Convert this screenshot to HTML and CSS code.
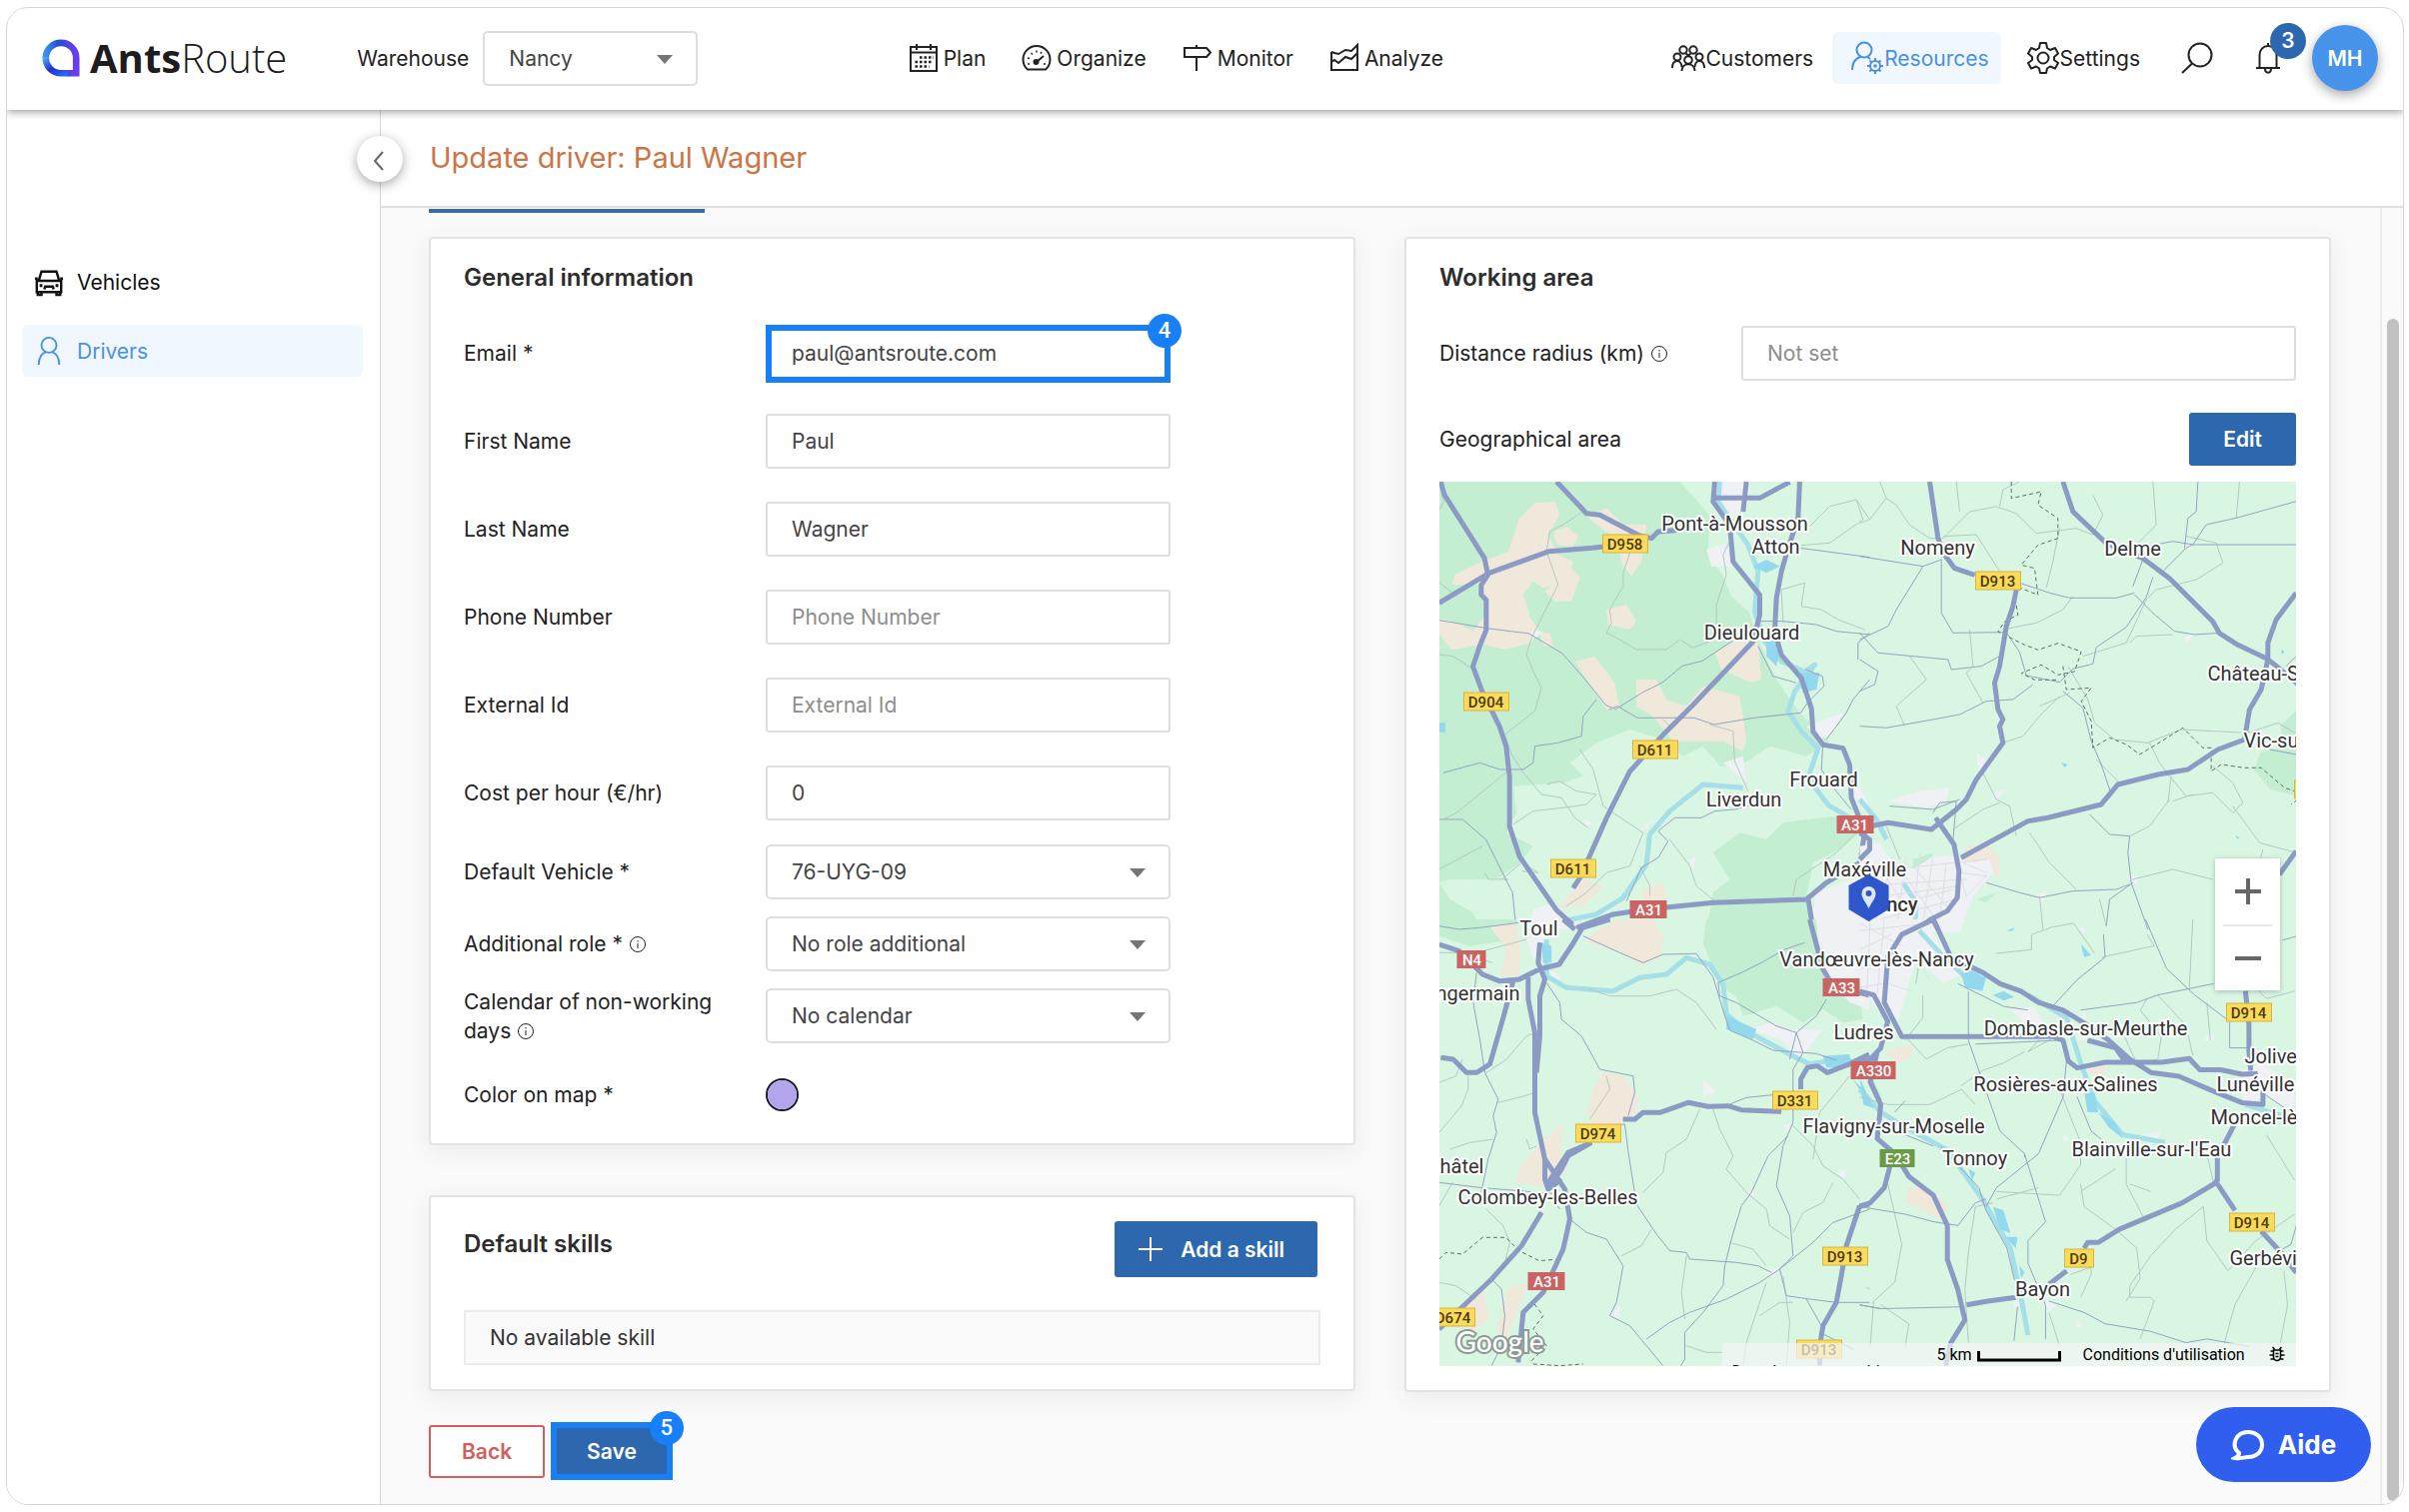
FILE: index.html
```html
<!DOCTYPE html>
<html lang="en">
<head>
<meta charset="utf-8">
<title>AntsRoute - Update driver</title>
<link rel="stylesheet" href="styles.css">
</head>
<body>
<div class="app">
  <header class="topbar">
    <a class="logo" href="#">
      <svg class="logo-mark" viewBox="0 0 40 40" aria-hidden="true">
        <defs>
          <linearGradient id="ring" x1="0" y1="0" x2="1" y2="0"><stop offset="0" stop-color="#3b8ef5"/><stop offset=".4" stop-color="#2350cf"/><stop offset="1" stop-color="#6a3df0"/></linearGradient>
          <linearGradient id="ring2" x1="0" y1="0" x2="1" y2="1"><stop offset="0" stop-color="#4aa8f8"/><stop offset=".5" stop-color="#1f2fd0"/><stop offset="1" stop-color="#2a6bf0"/></linearGradient>
        </defs>
        <path d="M4 20a16 16 0 0 1 32 0v16H26" fill="none" stroke="url(#ring)" stroke-width="7"/>
        <path d="M4 19a16 16 0 0 0 16 17h7" fill="none" stroke="url(#ring2)" stroke-width="7"/>
      </svg>
      <span class="logo-text"><b>Ants</b>Route</span>
    </a>
    <div class="warehouse">
      <label for="warehouse">Warehouse</label>
      <span class="select"><select id="warehouse"><option>Nancy</option></select></span>
    </div>
    <nav class="nav nav-main">
      <a href="#"><svg viewBox="0 0 30 30"><path d="M2 4h26v24H2zM2 9.500h26M8 1v6M22 1v6"/><path d="M11 14.500h14M6.500 19h18M6.500 23.500h14" stroke-dasharray="2.500 2" stroke-width="2.500"/></svg>Plan</a>
      <a href="#"><svg viewBox="0 0 30 30"><path d="M6 26.500a13.500 13.500 0 1 1 18 0zM15 19l7-6"/><circle cx="14.500" cy="19" r="2" fill="currentColor"/><path d="M6 21h2M6 15l2 .5M9.500 10l1.500 1.500M15 7.500v2M24 21h-2M20 9l-1 1.500" stroke-width="1.500"/></svg>Organize</a>
      <a href="#"><svg viewBox="0 0 30 30"><path d="M2 5h22l4 4.500-4 4.500H2zM14 2v3M14 14v14"/></svg>Monitor</a>
      <a href="#"><svg viewBox="0 0 30 30"><path d="M2 9v18h26V2l-6 6-6-1-7 4-4-1-3-1M2 19l3-2 4 3 7-6 6 2 6-6"/></svg>Analyze</a>
    </nav>
    <nav class="nav nav-side">
      <a href="#"><svg class="wide" viewBox="0 0 34 30"><circle cx="12" cy="7" r="3.700"/><circle cx="22" cy="7" r="3.700"/><circle cx="6" cy="14" r="3.500"/><circle cx="28" cy="14" r="3.500"/><circle cx="17" cy="17" r="3.800"/><path d="M1 25c0-9 9-9 9.500-1M33 25c0-9-9-9-9.500-1M10.500 28c0-9 13-9 13 0M14.500 10.500l2.500 2 2.500-2"/></svg>Customers</a>
      <a class="active" href="#"><svg class="wide" viewBox="0 0 34 34"><circle cx="14" cy="9" r="7.500"/><path d="M2 29c0-8 4-12 9-13.500M17 16l3 2"/><circle cx="25" cy="25" r="5"/><path d="M25 17v3M25 30v3M17 25h3M30 25h3M19.500 19.500l2 2M28.500 28.500l2 2M19.500 30.500l2-2M28.500 21.500l2-2"/><circle cx="25" cy="25" r=".8"/></svg>Resources</a>
      <a href="#"><svg class="wide" viewBox="0 0 34 34"><circle cx="17" cy="17" r="5.500"/><path d="M14 2h6l1 5 3 2 5-2 3 5.500-4 3.500v3l4 3-3 5.500-5-2-3 2-1 4.500h-6l-1-4.500-3-2-5 2-3-5.500 4-3v-3l-4-3.500L5 7l5 2 3-2z" stroke-linejoin="round"/></svg>Settings</a>
      <button class="icon-btn" type="button" aria-label="Search"><svg viewBox="0 0 34 34"><circle cx="20" cy="14" r="11.500"/><path d="M12 22.500L2 32"/></svg></button>
      <button class="icon-btn bell" type="button" aria-label="Notifications"><svg viewBox="0 0 34 34"><path d="M5 27h24M8.500 27V14c0-5 3.500-9 8.500-9s8.500 4 8.500 9v13M17 2v3M14 27.500c0 5.500 6 5.500 6 0"/></svg><span class="count">3</span></button>
      <button class="avatar" type="button">MH</button>
    </nav>
  </header>

  <div class="body">
    <aside class="sidebar">
      <a href="#"><svg viewBox="0 0 32 32"><path d="M3 15h26v12H3zM5 15l3-10h16l3 10M1 12.500h3M28 12.500h3M4 27v3h4v-3M24 27v3h4v-3M11 24l1-3h8l1 3" stroke-width="2.600"/><path d="M6 20h3M23 20h3" stroke-width="3"/></svg>Vehicles</a>
      <a class="active" href="#"><svg viewBox="0 0 32 32"><circle cx="16" cy="10" r="8"/><path d="M5 31c0-8 4-13 8-13.500M27 31c0-8-4-13-8-13.500"/></svg>Drivers</a>
      <button class="collapse" type="button" aria-label="Collapse menu"><svg viewBox="0 0 24 24"><path d="M15 3L7 12l8 9"/></svg></button>
    </aside>

    <main class="main">
      <div class="titlebar"><h1>Update driver: Paul Wagner</h1></div>
      <div class="scroll">
        <form class="content">
          <div class="tab-line"></div>
          <div class="columns">
            <div class="column">
              <section class="card general">
                <h2>General information</h2>
                <div class="field"><label for="email">Email *</label><div class="control step"><input id="email" type="email" value="paul@antsroute.com"><span class="pin">4</span></div></div>
                <div class="field"><label for="first">First Name</label><div class="control"><input id="first" type="text" value="Paul"></div></div>
                <div class="field"><label for="last">Last Name</label><div class="control"><input id="last" type="text" value="Wagner"></div></div>
                <div class="field"><label for="phone">Phone Number</label><div class="control"><input id="phone" type="tel" placeholder="Phone Number"></div></div>
                <div class="field"><label for="ext">External Id</label><div class="control"><input id="ext" type="text" placeholder="External Id"></div></div>
                <div class="field"><label for="cost">Cost per hour (€/hr)</label><div class="control"><input id="cost" type="text" value="0"></div></div>
                <div class="field tight"><label for="vehicle">Default Vehicle *</label><span class="control select"><select id="vehicle"><option>76-UYG-09</option></select></span></div>
                <div class="field tight"><label for="role">Additional role * <svg class="info" viewBox="0 0 18 18"><circle cx="9" cy="9" r="7.500"/><path d="M9 8v5M9 5v1.500"/></svg></label><span class="control select"><select id="role"><option>No role additional</option></select></span></div>
                <div class="field tight"><label for="calendar">Calendar of non-working days <svg class="info" viewBox="0 0 18 18"><circle cx="9" cy="9" r="7.500"/><path d="M9 8v5M9 5v1.500"/></svg></label><span class="control select"><select id="calendar"><option>No calendar</option></select></span></div>
                <div class="field color"><label for="color">Color on map *</label><input id="color" type="color" value="#b3a4eb"></div>
              </section>
              <section class="card skills">
                <div class="card-head"><h2>Default skills</h2><button class="btn add" type="button"><svg viewBox="0 0 24 24"><path d="M12 0v24M0 12h24"/></svg>Add a skill</button></div>
                <p class="empty">No available skill</p>
              </section>
            </div>
            <section class="card area">
              <h2>Working area</h2>
              <div class="field"><label for="radius">Distance radius (km) <svg class="info" viewBox="0 0 18 18"><circle cx="9" cy="9" r="7.500"/><path d="M9 8v5M9 5v1.500"/></svg></label><div class="control"><input id="radius" type="text" placeholder="Not set"></div></div>
              <div class="geo"><span>Geographical area</span><button class="btn edit" type="button">Edit</button></div>
              <div class="map">
                <svg class="map-canvas" viewBox="0 0 858 885" preserveAspectRatio="xMidYMid slice" role="img" aria-label="Map of Nancy">
                  <!-- north-west land cover -->
                  <g transform="translate(-9 -2) scale(.3333)">
                    <path class="forest" d="M28 6H750L800 60 840 110 835 220 880 290 905 350 960 400 980 470 1040 600 1110 700 1200 790 1130 830 1020 800 930 860 870 860 820 800 760 830 700 780 600 750 500 790 420 850 460 890 400 910 250 920 260 1000 230 1060 310 1100 270 1150 200 1200 60 1200 28 1210z"/>
                    <path class="forest" d="M850 1120L930 1060 1010 1080 1060 1030 1130 1020 1220 1010 1290 1060 1230 1110 1150 1150 1130 1250 1160 1350H830L850 1240 900 1200zM28 1210L60 1260 130 1300 150 1350H28z"/>
                    <path class="field-tan" d="M265 120l50-50 60-5 15 40-35 60 30 60 45 20-20 60-70 20-30-20-30 40 20 60-5 0 30 45-20 40-80 20-60-15-100 15-45-55 0-40 60 15 50 25 40-55-15-60 10-25-100 0 10-30 60-30 100-40 20-55zM370 155l40-15 35 30-15 30-50-5zM345 335l80-70 25 30-25 70-50 0zM470 110l60-25 50 50 70 0-15 110-30 45-30-40-10-70-45-30zM530 390l60-15 30 50-20 25-65-15zM435 545l60-15 60 80 15 80-40 0-40-60zM620 600l60 0 30 60 60 20 50-60 110 30 20 130-10 35-60-30-150 0-60-75-50-30zM855 520l70-40 60 10 10 110-30 10-90-40zM330 460l30 0 10 40-30 0zM380 1290l80-90 60 20-60 60zM640 1230l60-20 10 60-70 10z"/>
                    <path class="town" d="M830 210l60-20 15 70-60 0zM850 6h110v60l-40 40-50-10zM1130 740l110-40-30 60-40 20zM880 850l60-20 10 80zM300 1350l10-60 60-20 90 80zM1140 1350l20-110 160-60v170zM1230 900l60 20 30 60-10 20zM460 1020l30 10-20 10zM630 1050l40-30-20 30zM780 1140l20-10-10 40zM300 455l40 0-20 20z"/>
                    <path class="river" d="M870 6l-5 60 90 130 30 80-10 120 30 90 50 60 70 30 30-20-60 80-20 60 40 60 50 50-30 90 60 80 100 60M940 925l-120-10-100 80-60 70-10 90-70 100-80 50-100 20"/>
                    <path class="lake" d="M970 260l40-20 40 20-40 20zM1010 460l40 40-10 60-30-30zM1100 580l70 0-10 50-40 10zM28 730h18v28H28z"/>
                    <path class="lane" d="M130 570l-60-40-42-5M28 310l55 40M28 90l14-25-8-25M460 95l-60 40-40 20-10 60 35 100-50 100-30 60-15 50 20 50 25 50-20 70-90 70 20 60 40 60 50 60 60 10 40 60 40 30M600 220l-20 60 0 40-40 70 5 40-15 30 40 20 50 30h90l40-30 40 25 50-20 20-50 0-60 30-90-10-60 30-60M1060 430l-5-100 70-20-10 70 60 10 50 30 80 30M1280 60l20 60 0 0-100 70-120 10M1320 120l-40-60-80 20-60 60M450 810l40 60 30 110 120 80-40 100-70 20-60 60-60 40M720 740l-20-20M840 735l70 20 5 90 40 90M250 1035l60-40 90-10 70-10 30-30-60-10-50-30-40 10M28 1170l130-70M240 870l-160 130-40 20M1090 1250l10-50 60-40 60-40 60-60M720 1080l60 80 20 60 60 50M630 1160l30 60 0 30M215 1200l60-50 50 30-50-5M165 1180l10 20 60 0"/>
                    <path class="road" d="M28 422l150 25 120 15 100 60 70 80 60 75 30 12 80-50 60-30 60-50 60-15 90-60M538 690l25-10 60 35 170 0 60 20 120-20 140-15 20-30 50-50-5-30-50-20M500 660l-40 50-5 60-70 20-70 10-5 50-30 20-70 0-60-20-110 30M28 1020l70 0 70 60 50 100 30 60 10 100M1110 205l210 28M980 425l80 0 100 10 60 20 100 10M1320 600l-50 60-20 40-60 80M590 1265l45-100 50-30 30-50-30-30 50-40 80 0 40-20 60-5 60-15M1285 540l0-50 35-30M1100 610l-70-20-30-60-15-30M1180 790l-5 80 40 60 50 60"/>
                    <path id="major-nw" class="major" d="M32 6l12 40 120 190 10 50-20 30 0 30 15 15 0 90-20 50-20 60 30 80 50 100 20 60 10 90 0 150 30 90 110 160 50 45M380 6l90 95 40 5 115 60 40 10 20-20 70-5M28 370l150-90 180-65 130-10 90-10 75-15M1110 6l-5 110-30 90-20 70-15 80-5 100 20 70 60 70 30 90 5 70 30 40 60 10 20 50 5 100 40 100-10 70 40 60-20 70M855 6l-5 60 50 70 10 110 80 100 0 60-20 80-180 190-90 90-100 110-70 140-80 180-20 30M850 55l140 0 90-48M950 6l-10 90M440 1345l110-40 100-15 200-20 280-10 60-50 100-60M1135 1255l15 95"/>
                    <use class="major-core" href="#major-nw"/>
                  </g>
                  <!-- north-east -->
                  <g transform="translate(421 -2) scale(.3333)">
                    <path class="forest" d="M1313 690l-50 50 10 60-70 20-20 50 50 60 80 20zM160 1140l60-20-10 40-50 0zM350 1260l60-20-30 30zM0 1340l0-10z"/>
                    <path class="field-tan" d="M320 1100l60-10 40 50 0 50-60-20-60 10z"/>
                    <path class="town" d="M0 1100l60-10 40 60 60 20 60-40 60 0 60 20 50-10 10 40-60 70-40 110H0zM80 965l100-30 90-10-10 40-60 20zM350 820l40 30-30 40zM400 940l40-10-30 30zM970 480l30-20-10 30zM970 200l20-10 10 20zM1050 745l30 5-10 10zM800 1190l30 0 5 30zM530 1250l30-15-15 40z"/>
                    <path class="lake" d="M605 850l20 5-10 8zM1125 1068l15 6-5 5zM1265 510l10 5-8 10z"/>
                    <path class="river" d="M0 960l50 60 30 60M130 1210l40 60-5 80"/>
                    <path class="streets" d="M0 1180l380-40M0 1220l320-20M0 1260l300-40M20 1300l260-70M60 1320l230-60M100 1130l-60 220M140 1130l-30 220M180 1120l-20 220M220 1130l-30 200M260 1150l-20 170M50 1150l120 180M110 1150l110 160M160 1160l110 130M300 1180l80 10-60 60zM310 1150l70 30"/>
                    <path class="lane" d="M60 6l20 50 30 20 40 60 60 40 40 0 80-80 80-15 60 20 60 60 120-15 50 20 30-60-30-60M0 130l30-10 50-65M290 6l10 90M420 80l10-50 50-24M880 6l10 130-60 60M600 145l-20 100-20 80M250 170l100-5 70 110M640 350l-30 40-80 40-100 20M330 450l10 110-20 20 50 90M150 530l50 70-90 80 25 60M540 680l90-40M430 790l60-20 50-60 60-60M670 530l130-40 60-130 30-30 120-30 80-50-20-60-90-20M625 560l60 100 20 70 60 50 100 10 100-40 200 10 90-30 50 30M370 880l40 80 40 20 20 90M280 1050l90-60 50-20M870 790l30 60 30 40 50 60 80-10 60 60 30-30-30-60-60-50M710 840l70 70M925 970l10-80M1120 980l80 110 110 30M930 960l-60 80-60 30M1000 945l-60 20M510 1060l60 90 80 80M820 1200l120-30 120 30M540 1250l10 100M720 1260l20 80M1140 6l-10 110M80 1040l40 100M810 490l20-20 110-5M1210 1110l-10 40"/>
                    <path class="road" d="M0 230l190 30 55-20 0 160 35 60 160-2 40 60 20 70 100 20 40-40 60-15 10-50 90-60 60-90 20-60M190 260l-80 130-25 50-85 40M480 310l90 30 60 15 140 0 55-15M825 345l60 60 60 50 60 10 80-5M0 460l55 60 210 20 10 30 90-10 55-30M0 540l55 35-10 40-45 20M0 740l80 5 140-25 80-15 80-40 80-5 60-45M610 635l60 50 25 100 30 70 30 90M1310 65l-180 50-90 20-40 60-20 10-80 80M860 200l80-15 60 10 310 0M1015 6l-5 90-25 20-10 90M850 240l-30 80M690 1005l60 60 60 5-5 50 10 90 50 140M380 1210l100 30 60 15 100-20 130-5 40-15M740 1340l10-80 70-50M1310 530l-30 30M1230 810l80 15M90 980l130 10 80-30M220 1000l20-30 50-5-10 120"/>
                    <path class="border" d="M455 6l0 50 90-20-10 40 60 40 0 60-60 20-50 60 40 10 10 80-50-20-20 20 10 60-40 20-20 30 80 40 40 15 60-20 70 25-20 60-50 10-50-30-60 25 40 20 70 0M610 560l10 70 75-5-30 40 30 60 5 80 50-30 50 20 40 30 50-30 80-50 60 60 25 0 0 70 30-20 70 10 50 0 70 60 60 20-40 30"/>
                    <path id="major-ne" class="major" d="M210 6l25 170 20 50 30 40 60 20M470 330l-10 50-20 60-20 120-15 50 10 80 15 30-10 20 10 50-80 110-30 60-30 30-75 60-130-20-50 10M228 1015l55 80 15 80-5 80-30 40-50 25-40 30M610 6l30 90 100 95 110 45 80 60 130 130 20 35 55 35 85 40 20 15 90 75M1310 340l-60 80-25 70 0 50-20 90-35 60-15 90-80 30-90 60-90 15-120 30-50 60-160 40-60 10-200 110M0 1140l30-30 0-30-30-20M1310 1115l-50 70M220 1320l15 30"/>
                    <use class="major-core" href="#major-ne"/>
                  </g>
                  <!-- south-west -->
                  <g transform="translate(-9 438) scale(.3333)">
                    <path class="forest" d="M830 0h330l20 150 110 90 10 60-60 10-60-40-60 40-80-50-100 30-20-60-50-30-50-130zM28 0h230l0 60-140 20-90-30z"/>
                    <path class="field-tan" d="M460 60L560 0h110l30 50-10 60-50 30-50-30zM180 20l80-10 10 80 0 80-60 0 20-80zM470 580l20-70 30-50 60 10 50 70-10 40-80 60-50-20zM340 660l60-50-10 100 20 50-70 40-80-10 10-50zM100 1150l60-40 20 90-60 40zM230 1110l60-20-10 40-50 130-30-20z"/>
                    <path class="town" d="M290 60l60-20 10 60-50 20zM960 330l60-20 60 20 100 0-70 90-60-60zM820 480l40 40-40 10zM1160 0h160v270l-60-20-50-60-40-60zM540 1190l30-30 0 30zM1010 1060l40-15-20 30zM1060 620l20-10-5 30zM1220 760l30-10-10 30zM940 820l40-5-10 15zM360 150l40 30-30 0z"/>
                    <path class="river" d="M350 60l0 110 60 35 140 10 80-40 80-10 60-50 70 20 40 60 10 90 60 50 130 70 60 30 110-20 70 60 30 70"/>
                    <path class="lake" d="M335 70l30 10 0 50-25 0zM890 290l90 40-10 30-80-30zM1180 410l80-5 0 40-70 0zM1270 480l50 50v30z"/>
                    <path class="lane" d="M28 490l50-20 20-50M115 470l0 40-20 50-67 80M170 460l60-40 60-70 30-10M205 550l80-20 30-10M320 680l-20 10-10-30M60 690l60-20 70-10M28 860l40-70M170 870l50 50 20 50-20 80M530 470l10 40-60 90M640 820l60-60 10-60 60-40 40-90M850 570l20 60 40 80-20 40 60 70 60 50 10 50 60 40M1090 620l60 60 30 60 60 40 50 60M1090 940l30-60 60-30 30-60M900 970l70 20 40 50M1010 1090l-60 180-10 70M1060 1070l20 140-10 130M1150 720l20-140 90-110M480 210l60 20 120 0 80-20 60 40 60 80M770 1010l-15 110 10 80M770 1280l60 20 50 0M990 1190l60-40 40 0M28 1090l50 10 60 40M575 1010l60-30 30-50M1320 1110l-10-5M28 100l60 0 100 30M140 100l150-40"/>
                    <path class="road" d="M28 20l60 10 60-5 120-15M460 50l110 50 70 30 60-25 100-2 50 70 30 100 20 60 70 30 60 30 130 10 60 20M140 160l-10 90 20 110 15 100 40 80-15 50 10 50-25 80-25 120M28 790l120 15 240 20M350 190l40 60 5 50 60 50 55 100 100 20 5 50-20 70M510 620l75-5 10 80 25 160 60 90 40 50 50 5 10 20 140 10 65 10 40 20M420 900l50 40 60 20 50 80-20 110-20 40 60 30 50 60 50 60M1050 1050l40-40-10-120-40-90 20-120 30-70 0-160 30-50-20-60-60-20-120-70-50-20-5-40 70-30 60-30 70-40 60-20M1075 650l-60 60-50 110-30 40-30 100-20 80-5 60-60 80-55 60 0 80-40 70M1320 870l-110 40-60 60-100 80-60 40-100 50-110 40-60 30-70 50M1050 1050l20 80 70 10 80 10 100 0M1130 1140l45 80M1170 1240l100 50M1080 420l20-80 60-50 30-50M900 555l50-20 100-10M185 1080l30 30 10 80-10 90-30 60M390 870l-30-40"/>
                    <path class="border" d="M28 1020l20-20 50 5 60-50 70 0 40 40 60 30 60-5M350 1110l-40 40 30 40-30 40 40 50-50 50M310 1335l80 5 70-5"/>
                    <path id="major-sw" class="major" d="M28 75l60 20 70 70 50 20 60-5 60-30 60-15 40-60 30-50L540 0M330 70l-5 60 20 50-15 50 0 120-10 110M295 170l0 70 20 100 0 240 30 140 60 90 15 90-20 90-60 130-60 60-15 150M400 0l35 30M250 185l-30 110-40 140-40 25-30 0-40-40-37-5M345 720l0 60 10 30 40-30M355 810l40-60 20-40 70-40M355 790l60-90 70-30M335 880l-60 100-90 100-157 150M580 600l35 0 25-20h50l85-30 60 12 60-2 40 12 120 5M1113 510l0-30 20-35 30-5 30 20 65-25 60-30M1140 0l40 150 30 50M1290 860l30-5M1290 860l-40 120-15 90-15 80-40 70-10 60 0 60M1290 220l30 8"/>
                    <use class="major-core" href="#major-sw"/>
                  </g>
                  <!-- south-east -->
                  <g transform="translate(421 438) scale(.3508 .3782)">
                    <path class="field-tan" d="M135 710l60 0 60 50-30 30-90-40zM70 350l90-20-20 40-40 10zM640 380l60 0 0 30-40 0z"/>
                    <path class="town" d="M0 0h180l60 80 60 60-60 30-80-60-20 60-30 100-60-30-50-70zM430 240l70-10 30 60-40 0zM1090 400l60-20 90 60 0 70-80-40-70 20zM1070 540l20 0 0 20zM1000 300l10 20-30 0zM520 1000l40 20-20 20zM440 1000l20 20-20 10zM800 570l60-10-10 20zM620 1060l20 20-20 0zM580 570l20 10-20 10zM620 20l20 0 0 20zM640 240l20 80-40 0z"/>
                    <path class="streets" d="M0 30l200-20M0 80l90-40M0 130l80-20M0 180l70-10M30 0l-10 200M70 0l-20 200M0 10l120 60M110 110l50-10 40 60M80 170l70 20"/>
                    <path class="river" d="M170 30l60 60 80 70M480 200l110 60 40 120 40 100 80 90 120 20M0 450l60 60 70 40 120 60 100 130 80 130 30 130 20 100M1100 490l140 40"/>
                    <path class="lake" d="M290 145l30-10 40 20-10 35-50-10zM380 200l30-10 30 15-30 10zM630 65l30 30-20 5zM420 30l20-8-5 10zM640 455l30 5 10 50-30 0zM680 510l50 30 20 40-40-30zM0 420l40 80-30-10zM380 760l30 10 20 60-30-10zM415 840l35 0-5 30zM455 915l15 20-10 15zM310 660l20 10-10 20z"/>
                    <path class="lane" d="M390 90l100-10 0-40 60-20 60-10 60 80M820 40l20 30-150 30M950 0l-10 180M730 260l60 120 60-10 10-60-60-70 20-30M850 200l80 80 20 80M580 300l-60 30-40 20 60-60M130 310l60 60 60-30 60-10M0 470l80 20 120 0 90-40 40 40M290 440l60-40 60-20 60-30M570 450l60 140 0 60-60 80-180-10M390 740l120-30M630 720l100-60M760 620l0 80 50 90M630 700l10 60 90 60 60 50 10 80-40 60M770 700l60 20M980 760l-80 60-70 70-60 80 0 30 60 0 10 10M980 760l10 90 60 80 80-80 110-70M630 1000l30-60 0-20-60 20M840 1010l-40 100M1210 930l10 90-20 100M1130 920l-60 100-30 100M80 700l40 160-20 100-60 50-10 120M310 880l20-120 50-10M310 880l-10 100 10 140M60 1020l80 50-10 60M540 1040l30 90M160 170l10-60M180 200l0 60-50 60M1000 320l-10-100M1130 180l30 30 80-20M990 620l20 80M1240 690l-80-120"/>
                    <path class="road" d="M310 190l0 130 60 160 30 80 70 60 60 180-50 50 0 60 50 110 0 90M280 170l130 60 70 10M550 230l70-70 80-60-5-60M815 0l60 130 80 70 100 70 0 70 60 0M590 370l-10 100-70 150-120 90-30 50M630 240l160-20 60-20 160-30M470 620l0 10M230 600l110 110 20 60 60 100 20 80 20 30M130 570l80 30M0 760l130 20 80 20 70 10 50-60 30-10M0 1020l60 10 240-5M540 1010l100 30 60 30 130 20 100 30 60-10 120 20M620 470l40 90 80 60M440 1115l10-90M1205 55l40-10M1190 880l40-20 15-50M0 1020l60 10M330 330l240-10M130 480l-30 30M1150 460l80 50"/>
                    <path id="major-se" class="major" d="M210 0l-90 40-40 60-10 120 50 90 430 0 30 10 15 55 25 18 80-15h160l80-10 30 30 60 0 60 12 45-2M210 0l50 100 90 40 50 30 60 20 50 30 70 20 70 40 60 40 60 50 60 35 80 10 100 40 80 30 60 5 0-40M1115 400l-5-50 0-70-10-90M650 320l80 20 30 40M0 190l40 10 40 70-20 70-30 30-25 10M50 350l-20 80 30 60-10 90 50 40 40 60 70 50 40 80 0 90 30 80 20 80-40 60-15 60M90 640l-20 70-40 40-30 10M305 1020l60-10 80-10M540 965l50-35M640 870l10-15 30 0 60-35 180-70 90-50 10-10 0-60 50-90M1020 700l50 70M1145 825l60 60 40 50"/>
                    <use class="major-core" href="#major-se"/>
                  </g>
                  <!-- place names -->
                  <g class="places">
                    <text x="296" y="49">Pont-à-Mousson</text><text x="337" y="72">Atton</text><text x="313" y="158">Dieulouard</text><text x="385" y="305">Frouard</text><text x="305" y="325">Liverdun</text><text x="426" y="395">Maxéville</text><text x="100" y="454">Toul</text><text x="499" y="73">Nomeny</text><text x="694" y="74">Delme</text><text x="438" y="485">Vandœuvre-lès-Nancy</text><text x="425" y="558">Ludres</text><text x="647" y="554">Dombasle-sur-Meurthe</text><text x="627" y="610">Rosières-aux-Salines</text><text x="713" y="675">Blainville-sur-l'Eau</text><text x="536" y="684">Tonnoy</text><text x="455" y="652">Flavigny-sur-Moselle</text><text x="109" y="723">Colombey-les-Belles</text><text x="604" y="815">Bayon</text>
                  </g>
                  <g class="places from-left">
                    <text x="769" y="199">Château-S</text><text x="805" y="266">Vic-su</text><text x="806" y="582">Jolivet</text><text x="778" y="610">Lunéville</text><text x="772" y="643">Moncel-lè</text><text x="791" y="784">Gerbévil</text><text x="1" y="692">hâtel</text>
                  </g>
                  <g class="places from-right"><text x="81" y="519">mgermain</text><text class="city" x="479" y="430">Nancy</text></g>
                  <!-- road shields -->
                  <g class="shield dept">
                    <rect x="164" y="53" width="45" height="18"/><text x="186" y="68">D958</text>
                    <rect x="25" y="211" width="45" height="18"/><text x="47" y="226">D904</text>
                    <rect x="194" y="259" width="45" height="18"/><text x="216" y="274">D611</text>
                    <rect x="112" y="378" width="45" height="18"/><text x="134" y="393">D611</text>
                    <rect x="537" y="90" width="45" height="18"/><text x="559" y="105">D913</text>
                    <rect x="334" y="610" width="45" height="18"/><text x="356" y="625">D331</text>
                    <rect x="137" y="643" width="45" height="18"/><text x="159" y="658">D974</text>
                    <rect x="-9" y="827" width="45" height="18"/><text x="14" y="842">D674</text>
                    <rect x="384" y="766" width="45" height="18"/><text x="406" y="781">D913</text>
                    <rect x="358" y="859" width="45" height="18"/><text x="380" y="874">D913</text>
                    <rect x="626" y="768" width="29" height="18"/><text x="640" y="783">D9</text>
                    <rect x="788" y="522" width="45" height="18"/><text x="810" y="537">D914</text>
                    <rect x="791" y="732" width="45" height="18"/><text x="813" y="747">D914</text>
                    <rect x="856" y="299" width="45" height="18"/>
                  </g>
                  <g class="shield motorway">
                    <rect x="191" y="419" width="37" height="18"/><text x="210" y="434">A31</text>
                    <rect x="398" y="334" width="37" height="18"/><text x="416" y="349">A31</text>
                    <rect x="18" y="469" width="29" height="18"/><text x="33" y="484">N4</text>
                    <rect x="384" y="497" width="37" height="18"/><text x="403" y="512">A33</text>
                    <rect x="412" y="580" width="45" height="18"/><text x="435" y="595">A330</text>
                    <rect x="89" y="791" width="37" height="18"/><text x="108" y="806">A31</text>
                  </g>
                  <g class="shield euro"><rect x="441" y="668" width="35" height="18"/><text x="459" y="683">E23</text></g>
                  <!-- depot marker -->
                  <path d="M430 393l20 11v24l-20 12-20-12v-24z" fill="#2f56cb"/>
                  <path d="M430 427c-4-8-7-10-7-15a7 7 0 0 1 14 0c0 5-3 7-7 15z" fill="#dbe8ff"/><circle cx="430" cy="412" r="3" fill="#2f56cb"/>
                  <!-- attribution strip -->
                  <rect x="283" y="862" width="575" height="23" fill="#f5f5f5" opacity=".7"/>
                  <text class="google" x="17" y="871">Google</text>
                  <g class="credits">
                    <text x="293" y="896">Données cartographiques</text>
                    <text x="498" y="879">5 km</text>
                    <path d="M540 870v9h81v-9" fill="none" stroke="#000" stroke-width="3"/>
                    <text x="644" y="879">Conditions d'utilisation</text>
                    <path d="M835 869h7v7a3.500 3.500 0 0 1-7 0zM832 870h3M842 870h3M831 874h4M842 874h4M832 878h3M842 878h3M836 868l-2-2M841 868l2-2M837 872.500h3M837 875.500h3" fill="none" stroke="#000" stroke-width="1.500"/>
                  </g>
                </svg>
                <div class="zoom"><button type="button" aria-label="Zoom in"><svg viewBox="0 0 26 26"><path d="M13 0v26M0 13h26"/></svg></button><button type="button" aria-label="Zoom out"><svg viewBox="0 0 26 26"><path d="M0 13h26"/></svg></button></div>
              </div>
            </section>
          </div>
          <div class="actions">
            <button class="btn back" type="button">Back</button>
            <span class="step"><button class="btn save" type="submit">Save</button><span class="pin">5</span></span>
          </div>
        </form>
        <div class="scrollbar"><div class="thumb"></div></div>
      </div>
    </main>
  </div>
  <button class="help" type="button"><svg viewBox="0 0 34 34"><path d="M8 25c-9-8-3-21 9-21 8 0 14 5 14 12.500S25 29 17 29c-4 0-8 2-13 1 2-1 4-3 4-5z"/></svg>Aide</button>
</div>
</body>
</html>
```
FILE: styles.css
```css
* { box-sizing: border-box; }
body { margin: 0; background: #fff; color: #222; font: 400 21px/29px Inter, "Open Sans", sans-serif; }
a { color: inherit; text-decoration: none; }
button, input, select { font: inherit; color: inherit; }
button { cursor: pointer; }
h1, h2, p { margin: 0; }
svg { fill: none; stroke: currentColor; stroke-width: 2; flex: none; }

.app { position: relative; display: flex; flex-direction: column; height: calc(100vh - 14px); margin: 7px 5px 7px 6px; border: 1px solid #d6d6d6; border-radius: 22px; overflow: hidden; }

/* top bar */
.topbar { position: relative; z-index: 2; display: flex; align-items: center; flex: none; height: 102px; padding: 0 25px 2px 34px; background: #fff; box-shadow: 0 2px 8px rgba(0, 0, 0, .4); }
.logo { display: flex; align-items: center; gap: 9px; color: #1d1d1f; }
.logo-mark { width: 40px; height: 38px; }
.logo-text { font: 300 40px/50px "Open Sans", "Noto Sans", sans-serif; }
.logo-text b { font-weight: 700; }
.warehouse { display: flex; align-items: center; gap: 14px; margin-left: 70px; }
.select { position: relative; display: block; }
.select select { width: 100%; height: 55px; padding: 0 24px; border: 2px solid #dedede; border-radius: 5px; background: #fff; color: #444; appearance: none; }
.select::after { content: ""; position: absolute; right: 25px; top: 24px; border: 8px solid transparent; border-top: 9px solid #757575; border-bottom: 0; pointer-events: none; }
.warehouse .select { width: 215px; }
.nav { display: flex; align-items: center; white-space: nowrap; }
.nav a { display: flex; align-items: center; gap: 5px; }
.nav a svg { width: 30px; height: 30px; }
.nav a svg.wide { width: 34px; height: 34px; }
.nav-main { gap: 36px; margin: 0 auto; }
.nav-side a { height: 52px; padding: 0 12px 0 18px; margin-right: 7px; gap: 0; border-radius: 6px; }
.nav-side a.active { background: #f0f7fe; color: #4a90e2; }
.icon-btn { position: relative; width: 34px; height: 34px; padding: 0; border: 0; background: none; margin-left: 21px; }
.icon-btn svg { display: block; width: 34px; height: 34px; }
.icon-btn.bell { margin-left: 37px; }
.count { position: absolute; left: 19px; top: -18px; width: 36px; height: 36px; border-radius: 50%; background: #2d68ae; color: #fff; font-weight: 600; line-height: 36px; text-align: center; }
.avatar { width: 66px; height: 66px; margin-left: 27px; padding: 0; border: 0; border-radius: 50%; background: #4793ea; color: #fff; font-weight: 600; box-shadow: 0 4px 12px rgba(0, 0, 0, .35); }

/* frame */
.body { display: flex; flex: 1; min-height: 0; }
.sidebar { position: relative; z-index: 1; display: flex; flex-direction: column; gap: 17px; width: 374px; padding: 146px 17px 0 15px; border-right: 1px solid #d9d9d9; color: #111; background: #fff; }
.sidebar a { display: flex; align-items: center; gap: 12px; height: 52px; padding-left: 11px; border-radius: 6px; }
.sidebar a svg { width: 32px; height: 30px; }
.sidebar a.active { background: #f0f7fe; color: #4a90e2; }
.collapse { position: absolute; right: -23px; top: 26px; width: 46px; height: 46px; padding: 0; border: 0; border-radius: 50%; background: #fff; color: #666; box-shadow: 0 3px 12px rgba(0, 0, 0, .35); }
.collapse svg { width: 24px; height: 24px; vertical-align: middle; }
.main { display: flex; flex-direction: column; flex: 1; min-width: 0; background: #fafafa; }
.titlebar { flex: none; height: 98px; padding: 27px 49px; border-bottom: 2px solid #e0e0e0; background: #fff; }
h1 { font-weight: 400; font-size: 29px; line-height: 42px; color: #cc7444; }
.scroll { display: flex; flex: 1; min-height: 0; }
.content { flex: 1; min-width: 0; padding: 1px 49px 0 48px; }
.tab-line { width: 276px; height: 4px; background: #3d6aa3; }
.columns { display: grid; grid-template-columns: 1fr 1fr; gap: 49px; margin-top: 24px; }
.column { display: flex; flex-direction: column; gap: 50px; }
.scrollbar { width: 23px; border-left: 2px solid #ebebeb; padding: 111px 4px 3px 5px; }
.thumb { height: 100%; border-radius: 7px; background: #c1c1c1; }

/* cards */
.card { padding: 24px 33px; border: 2px solid #e2e3e5; border-radius: 4px; background: #fff; box-shadow: 0 6px 24px rgba(60, 70, 100, .08); }
h2 { font-weight: 600; font-size: 24px; line-height: 30px; color: #2d2d2d; }
.field { display: flex; align-items: center; height: 55px; margin-top: 33px; }
h2 + .field { margin-top: 33px; }
.field label { width: 302px; flex: none; padding-right: 30px; }
.control { position: relative; flex: 1; }
.general .control { flex: none; width: 405px; }
.control input { display: block; width: 100%; height: 55px; padding: 0 24px; border: 2px solid #dedede; border-radius: 3px; background: #fff; color: #444; }
.control input::placeholder { color: #8d8d8d; opacity: 1; }
.control.step input { height: 58px; padding: 0 20px; border: 6px solid #177ff8; border-radius: 0; outline: 0; }
.field.tight { margin-top: 17px; }
.field:not(.tight) + .tight { margin-top: 24px; }
.info { width: 18px; height: 18px; vertical-align: -2px; stroke-width: 1; }
.field.color { margin-top: 24px; }
.color input { width: 33px; height: 33px; padding: 0; border: 2px solid #1a1a2a; border-radius: 50%; background: #b3a4eb; overflow: hidden; appearance: none; }
.color input::-webkit-color-swatch-wrapper { padding: 0; }
.color input::-webkit-color-swatch { border: 0; }
.general { padding-bottom: 21px; }
.card-head { display: flex; justify-content: space-between; padding-right: 3px; }
.card-head h2 { padding-top: 8px; }
.btn { display: flex; align-items: center; justify-content: center; height: 53px; padding: 0 34px; border: 0; border-radius: 3px; background: #2d68ae; color: #fff; font-weight: 600; }
.btn.add { height: 56px; gap: 18px; padding: 0 33px 0 24px; }
.btn.add svg { width: 24px; height: 24px; }
.empty { margin-top: 33px; padding: 11px 24px; height: 55px; border: 2px solid #ebebeb; background: #fafafa; color: #333; }
.step { position: relative; display: block; }
.pin { position: absolute; right: -11px; top: -11px; width: 34px; height: 34px; border-radius: 50%; background: #177ff8; color: #fff; font: 500 22px/34px Roboto, sans-serif; text-align: center; }
.geo { display: flex; align-items: center; justify-content: space-between; margin-top: 32px; }
.actions { display: flex; align-items: center; gap: 6px; margin-top: 30px; }
.btn.back { padding: 0 31px; border: 2px solid #d0605e; background: #fff; color: #d0605e; }
.btn.save { height: 58px; padding: 0 30px; border: 6px solid #177ff8; border-radius: 0; }

/* map */
.map { position: relative; height: 885px; margin-top: 16px; overflow: hidden; background: #d9f6e3; }
.map-canvas { display: block; width: 100%; height: 100%; stroke: none; }
.map-canvas path { vector-effect: non-scaling-stroke; }
.forest { fill: #c3eed2; }
.field-tan { fill: #f1e8dc; }
.town { fill: #eff1f4; }
.lake { fill: #92d8ee; }
.river, .lane, .road, .major, .border, .streets { fill: none; stroke-linejoin: round; }
.river { stroke: #a5dfe8; stroke-width: 5; }
.streets { stroke: #dcdfe8; stroke-width: 1; }
.lane { stroke: #b4c8c4; stroke-width: 1; }
.road { stroke: #93a5bd; stroke-width: 1; }
.major { stroke-width: inherit; }
.map-canvas g { stroke-width: 5; }
.major { stroke: #8b9bc4; }
.major-core { stroke-width: 2; }
.border { stroke: #5b6e66; stroke-width: 1; stroke-dasharray: 4 3; }
.map-canvas .places { font: 400 20px Roboto, sans-serif; fill: #333; stroke: #fff; stroke-width: 4; stroke-linejoin: round; paint-order: stroke; text-anchor: middle; }
.map-canvas .from-left { text-anchor: start; }
.map-canvas .from-right { text-anchor: end; }
.city { font-weight: 500; }
.shield { font: 500 15px Roboto, sans-serif; text-anchor: middle; stroke: none; }
.shield.dept rect { fill: #fbdb59; stroke: #d9b43d; stroke-width: 1; }
.shield.dept { fill: #4a3c10; }
.shield.motorway { fill: #fff; }
.shield.motorway rect { fill: #cb6363; }
.shield.euro { fill: #fff; }
.shield.euro rect { fill: #6a9a48; }
.google { font: 500 28px Lato, sans-serif; fill: #fff; stroke: #8b9a92; stroke-width: 4; paint-order: stroke; }
.credits { font: 400 16px Roboto, sans-serif; fill: #000; }
.zoom { position: absolute; right: 16px; top: 377px; width: 65px; padding: 0 8px; background: #fff; box-shadow: 0 1px 5px rgba(0, 0, 0, .25); }
.zoom button { display: flex; align-items: center; justify-content: center; width: 100%; height: 66px; padding: 0; border: 0; background: none; color: #666; }
.zoom button + button { border-top: 2px solid #e6e6e6; }
.zoom svg { width: 26px; height: 26px; stroke-width: 4; }

.help { position: absolute; right: 32px; bottom: 22px; display: flex; align-items: center; justify-content: center; gap: 13px; width: 175px; height: 75px; padding: 0; border: 0; border-radius: 38px; background: #305ff0; color: #fff; font-weight: 700; font-size: 26px; }
.help svg { width: 34px; height: 34px; stroke-width: 4; }
```
